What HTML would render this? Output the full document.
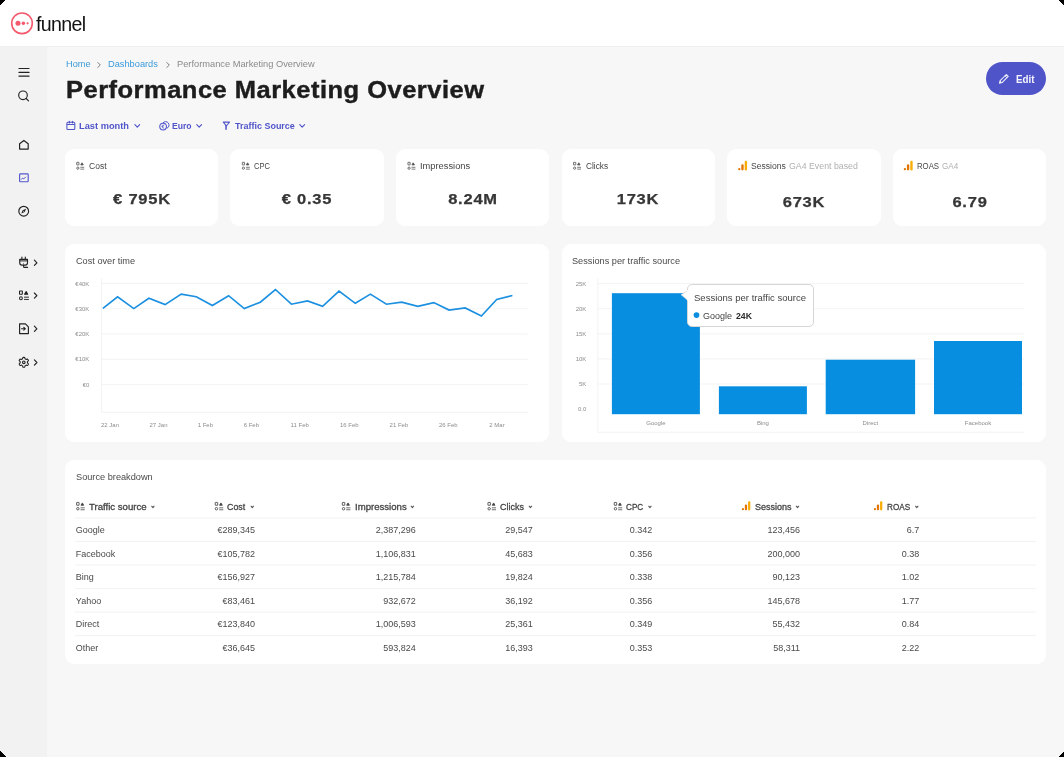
<!DOCTYPE html>
<html><head><meta charset="utf-8"><title>Performance Marketing Overview</title>
<style>
html,body{margin:0;padding:0;}
body{width:1064px;height:757px;overflow:hidden;background:#000;font-family:"Liberation Sans", sans-serif;position:relative;}
.page{position:absolute;left:0;top:0;width:1064px;height:757px;background:#f7f7f7;will-change:transform;}
.t{position:absolute;white-space:nowrap;line-height:1;-webkit-font-smoothing:antialiased;}
.card{position:absolute;background:#fff;border-radius:9px;}
svg{position:absolute;left:0;top:0;overflow:visible;}
</style></head>
<body>
<div class="page"><div style="position:absolute;left:0;top:0;width:1064px;height:46px;background:#fff;border-bottom:1px solid #efefef"></div><div style="position:absolute;left:0;top:47px;width:47px;height:710px;background:#f2f2f2;"></div><div class="card" style="left:64.70px;top:149px;width:153.6px;height:77.1px"></div><div class="card" style="left:230.30px;top:149px;width:153.6px;height:77.1px"></div><div class="card" style="left:395.90px;top:149px;width:153.6px;height:77.1px"></div><div class="card" style="left:561.50px;top:149px;width:153.6px;height:77.1px"></div><div class="card" style="left:727.10px;top:149px;width:153.6px;height:77.1px"></div><div class="card" style="left:892.70px;top:149px;width:153.6px;height:77.1px"></div><div class="card" style="left:64.7px;top:243.8px;width:484.8px;height:198.6px"></div><div class="card" style="left:561.5px;top:243.8px;width:484.8px;height:198.6px"></div><div class="card" style="left:64.7px;top:460.4px;width:981.6px;height:203.7px"></div><svg width="1064" height="757" viewBox="0 0 1064 757"><circle cx="22" cy="23.3" r="10.3" fill="none" stroke="#f4596d" stroke-width="1.6"/><circle cx="18" cy="23.3" r="2.5" fill="#f4596d"/><circle cx="23.4" cy="23.3" r="1.75" fill="#f4596d"/><circle cx="27.6" cy="23.3" r="1.1" fill="#f4596d"/><line x1="19" y1="68.5" x2="29" y2="68.5" stroke="#222" stroke-width="1.2" stroke-linecap="round"/><line x1="19" y1="72.4" x2="29" y2="72.4" stroke="#222" stroke-width="1.2" stroke-linecap="round"/><line x1="19" y1="76.2" x2="29" y2="76.2" stroke="#222" stroke-width="1.2" stroke-linecap="round"/><circle cx="23" cy="95.3" r="4.3" fill="none" stroke="#222" stroke-width="1.15"/><line x1="26.2" y1="98.5" x2="28.5" y2="100.8" stroke="#222" stroke-width="1.15" stroke-linecap="round"/><path d="M19.6 143.7 L23.9 140.4 L28.2 143.7 V149.1 H19.6 Z" fill="none" stroke="#222" stroke-width="1.2" stroke-linejoin="round"/><rect x="19.6" y="173.9" width="8.6" height="7.8" rx="0.8" fill="none" stroke="#5257cd" stroke-width="1.15"/><polyline points="21.3,179.4 22.7,178 23.8,178.9 25.5,177.1" fill="none" stroke="#5257cd" stroke-width="1" stroke-linejoin="round" stroke-linecap="round"/><circle cx="23.7" cy="211.2" r="4.9" fill="none" stroke="#222" stroke-width="1.15"/><path d="M21.3 213.6 L22.6 210.3 L26.1 208.8 L24.7 212.1 Z" fill="#222"/><circle cx="23.7" cy="211.2" r="0.5" fill="#f2f2f2"/><path d="M21.9 257.1 V259.2 M25.3 257.1 V259.2" stroke="#222" stroke-width="1.1" stroke-linecap="round"/><path d="M19.7 259.4 H27.5 V262.8 Q27.5 265.1 25.2 265.1 H22 Q19.7 265.1 19.7 262.8 Z" fill="none" stroke="#222" stroke-width="1.1" stroke-linejoin="round"/><circle cx="23.6" cy="263.3" r="0.45" fill="#222"/><line x1="19.6" y1="260.9" x2="27.6" y2="260.9" stroke="#222" stroke-width="1"/><path d="M23.6 265.1 V266.7 Q23.6 267.4 24.3 267.4 H27.6" fill="none" stroke="#222" stroke-width="1.1" stroke-linecap="round"/><rect x="19.52" y="290.92" width="2.81" height="3.26" rx="0.30" fill="none" stroke="#222" stroke-width="1.05"/><path d="M26.13 291.51 L27.68 294.19 L24.57 294.19 Z" fill="#222" stroke="#222" stroke-width="1.05" stroke-linejoin="round"/><circle cx="20.93" cy="298.24" r="1.41" fill="none" stroke="#222" stroke-width="1.05"/><path d="M24.05 297.16 H28.90 M24.05 299.42 H28.90" stroke="#222" stroke-width="0.95"/><path d="M19.6 323.8 H25.4 L28.4 326.8 V333.6 H19.6 Z" fill="none" stroke="#222" stroke-width="1.15" stroke-linejoin="round"/><path d="M21.5 328.7 H25.3 M23.8 327.3 L25.3 328.7 L23.8 330.1" fill="none" stroke="#222" stroke-width="1.1" stroke-linecap="round" stroke-linejoin="round"/><polygon points="27.48,362.30 27.47,362.62 27.42,362.94 27.95,363.41 28.42,363.98 28.26,364.38 28.06,364.76 27.83,365.12 27.57,365.46 26.84,365.34 26.17,365.12 25.91,365.31 25.64,365.49 25.36,365.64 25.06,365.76 24.91,366.45 24.65,367.15 24.23,367.20 23.80,367.22 23.37,367.20 22.95,367.15 22.69,366.45 22.54,365.76 22.24,365.64 21.96,365.49 21.69,365.31 21.43,365.12 20.76,365.34 20.03,365.46 19.77,365.12 19.54,364.76 19.34,364.38 19.18,363.98 19.65,363.41 20.18,362.94 20.13,362.62 20.12,362.30 20.13,361.98 20.18,361.66 19.65,361.19 19.18,360.62 19.34,360.22 19.54,359.84 19.77,359.48 20.03,359.14 20.76,359.26 21.43,359.48 21.69,359.29 21.96,359.11 22.24,358.96 22.54,358.84 22.69,358.15 22.95,357.45 23.37,357.40 23.80,357.38 24.23,357.40 24.65,357.45 24.91,358.15 25.06,358.84 25.36,358.96 25.64,359.11 25.91,359.29 26.17,359.48 26.84,359.26 27.57,359.14 27.83,359.48 28.06,359.84 28.26,360.22 28.42,360.62 27.95,361.19 27.42,361.66 27.47,361.98" fill="none" stroke="#222" stroke-width="1.1" stroke-linejoin="round"/><circle cx="23.8" cy="362.3" r="1.3" fill="none" stroke="#222" stroke-width="1.1"/><polyline points="34.4,260.20 36.9,262.80 34.4,265.40" fill="none" stroke="#222" stroke-width="1.15" stroke-linecap="round" stroke-linejoin="round"/><polyline points="34.4,293.00 36.9,295.60 34.4,298.20" fill="none" stroke="#222" stroke-width="1.15" stroke-linecap="round" stroke-linejoin="round"/><polyline points="34.4,326.20 36.9,328.80 34.4,331.40" fill="none" stroke="#222" stroke-width="1.15" stroke-linecap="round" stroke-linejoin="round"/><polyline points="34.4,359.90 36.9,362.50 34.4,365.10" fill="none" stroke="#222" stroke-width="1.15" stroke-linecap="round" stroke-linejoin="round"/><polygon points="0,0 5.5,0 0,5.5" fill="#000" shape-rendering="crispEdges"/><polygon points="1064,0 1058,0 1064,6" fill="#000" shape-rendering="crispEdges"/><polygon points="0,751 0,757 7,757" fill="#000" shape-rendering="crispEdges"/><polygon points="1064,751 1064,757 1058,757" fill="#000" shape-rendering="crispEdges"/><line x1="101.5" y1="283.40" x2="527.8" y2="283.40" stroke="#f0f0f0" stroke-width="0.8"/><line x1="101.5" y1="308.70" x2="527.8" y2="308.70" stroke="#f0f0f0" stroke-width="0.8"/><line x1="101.5" y1="334.00" x2="527.8" y2="334.00" stroke="#f0f0f0" stroke-width="0.8"/><line x1="101.5" y1="359.30" x2="527.8" y2="359.30" stroke="#f0f0f0" stroke-width="0.8"/><line x1="101.5" y1="384.60" x2="527.8" y2="384.60" stroke="#f0f0f0" stroke-width="0.8"/><line x1="101.5" y1="278.4" x2="101.5" y2="412.3" stroke="#f0f0f0" stroke-width="0.8"/><line x1="101.5" y1="412.3" x2="527.8" y2="412.3" stroke="#f0f0f0" stroke-width="0.8"/><polyline points="102.9,308.3 117.6,296.8 133.8,308.6 148.9,298.3 165.1,304.6 181.2,294.1 196.3,296.7 212.4,305.5 228.6,295.7 244.3,308.6 260.3,302.2 275.4,289.5 291.4,304.2 307.5,300.9 322.6,306.3 339,291.1 355.3,303.3 370.4,294.1 386.4,304.2 401.7,302.2 417.8,306.3 433.8,302.6 449.1,310.1 465.2,307.9 481.4,316.1 496.7,299.5 512.4,295.5" fill="none" stroke="#1b8fe0" stroke-width="1.65" stroke-linejoin="miter" stroke-miterlimit="3"/><line x1="597.8" y1="283.60" x2="1024.2" y2="283.60" stroke="#f0f0f0" stroke-width="0.8"/><line x1="597.8" y1="308.70" x2="1024.2" y2="308.70" stroke="#f0f0f0" stroke-width="0.8"/><line x1="597.8" y1="333.80" x2="1024.2" y2="333.80" stroke="#f0f0f0" stroke-width="0.8"/><line x1="597.8" y1="358.90" x2="1024.2" y2="358.90" stroke="#f0f0f0" stroke-width="0.8"/><line x1="597.8" y1="384.00" x2="1024.2" y2="384.00" stroke="#f0f0f0" stroke-width="0.8"/><line x1="597.8" y1="278.4" x2="597.8" y2="432.3" stroke="#f0f0f0" stroke-width="0.8"/><line x1="597.8" y1="432.3" x2="1024.2" y2="432.3" stroke="#f0f0f0" stroke-width="0.8"/><rect x="611.9" y="293.2" width="88.00" height="121.00" fill="#088ee0"/><rect x="718.9" y="386.3" width="88.00" height="27.90" fill="#088ee0"/><rect x="825.7" y="359.7" width="89.40" height="54.50" fill="#088ee0"/><rect x="934" y="341" width="88.00" height="73.20" fill="#088ee0"/><line x1="75.2" y1="517.90" x2="1035.9" y2="517.90" stroke="#efefef" stroke-width="0.8"/><line x1="75.2" y1="541.45" x2="1035.9" y2="541.45" stroke="#efefef" stroke-width="0.8"/><line x1="75.2" y1="565.00" x2="1035.9" y2="565.00" stroke="#efefef" stroke-width="0.8"/><line x1="75.2" y1="588.55" x2="1035.9" y2="588.55" stroke="#efefef" stroke-width="0.8"/><line x1="75.2" y1="612.10" x2="1035.9" y2="612.10" stroke="#efefef" stroke-width="0.8"/><line x1="75.2" y1="635.65" x2="1035.9" y2="635.65" stroke="#efefef" stroke-width="0.8"/><rect x="76.72" y="162.33" width="2.24" height="2.60" rx="0.24" fill="none" stroke="#555" stroke-width="0.85"/><path d="M82.00 162.80 L83.24 164.92 L80.76 164.92 Z" fill="#555" stroke="#555" stroke-width="0.85" stroke-linejoin="round"/><circle cx="77.84" cy="168.17" r="1.12" fill="none" stroke="#555" stroke-width="0.85"/><path d="M80.34 167.31 H84.22 M80.34 169.11 H84.22" stroke="#555" stroke-width="0.77"/><rect x="242.33" y="162.33" width="2.24" height="2.60" rx="0.24" fill="none" stroke="#555" stroke-width="0.85"/><path d="M247.60 162.80 L248.84 164.92 L246.36 164.92 Z" fill="#555" stroke="#555" stroke-width="0.85" stroke-linejoin="round"/><circle cx="243.44" cy="168.17" r="1.12" fill="none" stroke="#555" stroke-width="0.85"/><path d="M245.94 167.31 H249.82 M245.94 169.11 H249.82" stroke="#555" stroke-width="0.77"/><rect x="407.93" y="162.33" width="2.24" height="2.60" rx="0.24" fill="none" stroke="#555" stroke-width="0.85"/><path d="M413.20 162.80 L414.44 164.92 L411.96 164.92 Z" fill="#555" stroke="#555" stroke-width="0.85" stroke-linejoin="round"/><circle cx="409.04" cy="168.17" r="1.12" fill="none" stroke="#555" stroke-width="0.85"/><path d="M411.54 167.31 H415.42 M411.54 169.11 H415.42" stroke="#555" stroke-width="0.77"/><rect x="573.52" y="162.33" width="2.24" height="2.60" rx="0.24" fill="none" stroke="#555" stroke-width="0.85"/><path d="M578.80 162.80 L580.04 164.92 L577.56 164.92 Z" fill="#555" stroke="#555" stroke-width="0.85" stroke-linejoin="round"/><circle cx="574.64" cy="168.17" r="1.12" fill="none" stroke="#555" stroke-width="0.85"/><path d="M577.14 167.31 H581.02 M577.14 169.11 H581.02" stroke="#555" stroke-width="0.77"/><circle cx="739.30" cy="169.20" r="1.15" fill="#e37400"/><rect x="741.30" y="164.30" width="2.35" height="6.10" rx="1.10" fill="#e37400"/><rect x="744.70" y="160.80" width="2.35" height="9.70" rx="1.10" fill="#f9ab00"/><circle cx="904.90" cy="169.20" r="1.15" fill="#e37400"/><rect x="906.90" y="164.30" width="2.35" height="6.10" rx="1.10" fill="#e37400"/><rect x="910.30" y="160.80" width="2.35" height="9.70" rx="1.10" fill="#f9ab00"/><rect x="76.62" y="502.43" width="2.47" height="2.86" rx="0.26" fill="none" stroke="#444" stroke-width="0.85"/><path d="M82.33 502.93 L83.69 505.28 L80.97 505.28 Z" fill="#444" stroke="#444" stroke-width="0.85" stroke-linejoin="round"/><circle cx="77.86" cy="508.74" r="1.24" fill="none" stroke="#444" stroke-width="0.85"/><path d="M80.54 507.82 H84.71 M80.54 509.75 H84.71" stroke="#444" stroke-width="0.77"/><rect x="215.23" y="502.43" width="2.47" height="2.86" rx="0.26" fill="none" stroke="#444" stroke-width="0.85"/><path d="M220.93 502.93 L222.29 505.28 L219.57 505.28 Z" fill="#444" stroke="#444" stroke-width="0.85" stroke-linejoin="round"/><circle cx="216.46" cy="508.74" r="1.24" fill="none" stroke="#444" stroke-width="0.85"/><path d="M219.14 507.82 H223.31 M219.14 509.75 H223.31" stroke="#444" stroke-width="0.77"/><rect x="342.32" y="502.43" width="2.47" height="2.86" rx="0.26" fill="none" stroke="#444" stroke-width="0.85"/><path d="M348.03 502.93 L349.39 505.28 L346.67 505.28 Z" fill="#444" stroke="#444" stroke-width="0.85" stroke-linejoin="round"/><circle cx="343.56" cy="508.74" r="1.24" fill="none" stroke="#444" stroke-width="0.85"/><path d="M346.24 507.82 H350.41 M346.24 509.75 H350.41" stroke="#444" stroke-width="0.77"/><rect x="487.93" y="502.43" width="2.47" height="2.86" rx="0.26" fill="none" stroke="#444" stroke-width="0.85"/><path d="M493.63 502.93 L494.99 505.28 L492.27 505.28 Z" fill="#444" stroke="#444" stroke-width="0.85" stroke-linejoin="round"/><circle cx="489.16" cy="508.74" r="1.24" fill="none" stroke="#444" stroke-width="0.85"/><path d="M491.84 507.82 H496.01 M491.84 509.75 H496.01" stroke="#444" stroke-width="0.77"/><rect x="614.22" y="502.43" width="2.47" height="2.86" rx="0.26" fill="none" stroke="#444" stroke-width="0.85"/><path d="M619.93 502.93 L621.29 505.28 L618.57 505.28 Z" fill="#444" stroke="#444" stroke-width="0.85" stroke-linejoin="round"/><circle cx="615.46" cy="508.74" r="1.24" fill="none" stroke="#444" stroke-width="0.85"/><path d="M618.14 507.82 H622.31 M618.14 509.75 H622.31" stroke="#444" stroke-width="0.77"/><circle cx="742.94" cy="509.18" r="1.09" fill="#e37400"/><rect x="744.85" y="504.52" width="2.23" height="5.79" rx="1.04" fill="#e37400"/><rect x="748.07" y="501.20" width="2.23" height="9.21" rx="1.04" fill="#f9ab00"/><circle cx="874.94" cy="509.18" r="1.09" fill="#e37400"/><rect x="876.85" y="504.52" width="2.23" height="5.79" rx="1.04" fill="#e37400"/><rect x="880.07" y="501.20" width="2.23" height="9.21" rx="1.04" fill="#f9ab00"/><polyline points="151.70,506.24 152.90,507.56 154.10,506.24" fill="none" stroke="#555" stroke-width="1.1" stroke-linecap="round" stroke-linejoin="round"/><polyline points="251.10,506.24 252.30,507.56 253.50,506.24" fill="none" stroke="#555" stroke-width="1.1" stroke-linecap="round" stroke-linejoin="round"/><polyline points="411.20,506.24 412.40,507.56 413.60,506.24" fill="none" stroke="#555" stroke-width="1.1" stroke-linecap="round" stroke-linejoin="round"/><polyline points="529.20,506.24 530.40,507.56 531.60,506.24" fill="none" stroke="#555" stroke-width="1.1" stroke-linecap="round" stroke-linejoin="round"/><polyline points="648.70,506.24 649.90,507.56 651.10,506.24" fill="none" stroke="#555" stroke-width="1.1" stroke-linecap="round" stroke-linejoin="round"/><polyline points="796.30,506.24 797.50,507.56 798.70,506.24" fill="none" stroke="#555" stroke-width="1.1" stroke-linecap="round" stroke-linejoin="round"/><polyline points="915.60,506.24 916.80,507.56 918.00,506.24" fill="none" stroke="#555" stroke-width="1.1" stroke-linecap="round" stroke-linejoin="round"/><rect x="66.9" y="122.2" width="7.9" height="7.2" rx="1" fill="none" stroke="#4f54c9" stroke-width="1.05"/><line x1="66.9" y1="124.5" x2="74.8" y2="124.5" stroke="#4f54c9" stroke-width="1"/><line x1="69.4" y1="121.2" x2="69.4" y2="123.0" stroke="#4f54c9" stroke-width="1.05" stroke-linecap="round"/><line x1="72.5" y1="121.2" x2="72.5" y2="123.0" stroke="#4f54c9" stroke-width="1.05" stroke-linecap="round"/><polyline points="134.90,124.58 137.30,127.22 139.70,124.58" fill="none" stroke="#4f54c9" stroke-width="1.1" stroke-linecap="round" stroke-linejoin="round"/><circle cx="163.1" cy="126.6" r="3.35" fill="none" stroke="#4f54c9" stroke-width="1.05"/><path d="M162.9 123.0 A3.4 3.4 0 1 1 166.9 128.2" fill="none" stroke="#4f54c9" stroke-width="1.0"/><path d="M164.2 125.0 Q162.2 124.9 162.2 126.6 Q162.2 128.3 164.2 128.2 M161.4 126.2 H163.6" fill="none" stroke="#4f54c9" stroke-width="0.8"/><polyline points="196.80,124.58 199.20,127.22 201.60,124.58" fill="none" stroke="#4f54c9" stroke-width="1.1" stroke-linecap="round" stroke-linejoin="round"/><path d="M223.3 122.1 H229.5 L226.3 126.0 Z" fill="none" stroke="#4f54c9" stroke-width="1.05" stroke-linejoin="round"/><path d="M226.0 125.6 V129.2" stroke="#4f54c9" stroke-width="1.5" stroke-linecap="round"/><polyline points="299.80,124.58 302.20,127.22 304.60,124.58" fill="none" stroke="#4f54c9" stroke-width="1.1" stroke-linecap="round" stroke-linejoin="round"/><polyline points="97.80,62.50 100.30,65.00 97.80,67.50" fill="none" stroke="#777" stroke-width="0.95" stroke-linecap="round" stroke-linejoin="round"/><polyline points="166.80,62.50 169.30,65.00 166.80,67.50" fill="none" stroke="#777" stroke-width="0.95" stroke-linecap="round" stroke-linejoin="round"/></svg><div class="t" style="left:35.90px;top:13.67px;font-size:20px;color:#111;font-weight:normal;transform:scaleX(0.9824);transform-origin:0 0;letter-spacing:-0.7px;">funnel</div><div class="t" style="left:65.90px;top:60.30px;font-size:9.1px;color:#3b9bdb;font-weight:normal;transform:scaleX(1.0144);transform-origin:0 0;letter-spacing:0px;">Home</div><div class="t" style="left:108.40px;top:60.30px;font-size:9.1px;color:#3b9bdb;font-weight:normal;transform:scaleX(1.0173);transform-origin:0 0;letter-spacing:0px;">Dashboards</div><div class="t" style="left:176.90px;top:60.21px;font-size:9.2px;color:#8a8a8a;font-weight:normal;transform:scaleX(1.0099);transform-origin:0 0;letter-spacing:0px;">Performance Marketing Overview</div><div class="t" style="left:65.80px;top:79.43px;font-size:23.0px;color:#1d1d1d;font-weight:bold;transform:scaleX(1.1076);transform-origin:0 0;-webkit-text-stroke:0.4px #1d1d1d;letter-spacing:0.45px;">Performance Marketing Overview</div><div class="t" style="left:79.30px;top:121.50px;font-size:9.1px;color:#4f54c9;font-weight:bold;transform:scaleX(1.0194);transform-origin:0 0;letter-spacing:0px;">Last month</div><div class="t" style="left:171.60px;top:121.50px;font-size:9.1px;color:#4f54c9;font-weight:bold;transform:scaleX(0.9446);transform-origin:0 0;letter-spacing:0px;">Euro</div><div class="t" style="left:234.70px;top:121.50px;font-size:9.1px;color:#4f54c9;font-weight:bold;transform:scaleX(0.9868);transform-origin:0 0;letter-spacing:0px;">Traffic Source</div><div style="position:absolute;left:985.9px;top:61.9px;width:60.3px;height:33.6px;border-radius:17px;background:#4f55c9"></div><div class="t" style="left:1015.70px;top:74.65px;font-size:10.1px;color:#f4f4fc;font-weight:bold;transform:scaleX(0.9738);transform-origin:0 0;letter-spacing:0px;">Edit</div><div class="t" style="left:89.20px;top:162.07px;font-size:8.9px;color:#454545;font-weight:normal;transform:scaleX(0.9617);transform-origin:0 0;letter-spacing:0px;">Cost</div><div class="t" style="left:141.50px;transform:translateX(-50%) scaleX(1.1);top:191.00px;font-size:15.0px;color:#363636;font-weight:bold;letter-spacing:0.7px;-webkit-text-stroke:0.25px #363636;">€ 795K</div><div class="t" style="left:254.30px;top:162.07px;font-size:8.9px;color:#454545;font-weight:normal;transform:scaleX(0.8511);transform-origin:0 0;letter-spacing:0px;">CPC</div><div class="t" style="left:307.10px;transform:translateX(-50%) scaleX(1.1);top:191.00px;font-size:15.0px;color:#363636;font-weight:bold;letter-spacing:0.7px;-webkit-text-stroke:0.25px #363636;">€ 0.35</div><div class="t" style="left:419.70px;top:162.07px;font-size:8.9px;color:#454545;font-weight:normal;transform:scaleX(1.0479);transform-origin:0 0;letter-spacing:0px;">Impressions</div><div class="t" style="left:472.70px;transform:translateX(-50%) scaleX(1.1);top:191.00px;font-size:15.0px;color:#363636;font-weight:bold;letter-spacing:0.7px;-webkit-text-stroke:0.25px #363636;">8.24M</div><div class="t" style="left:585.70px;top:162.07px;font-size:8.9px;color:#454545;font-weight:normal;transform:scaleX(0.9305);transform-origin:0 0;letter-spacing:0px;">Clicks</div><div class="t" style="left:638.30px;transform:translateX(-50%) scaleX(1.1);top:191.00px;font-size:15.0px;color:#363636;font-weight:bold;letter-spacing:0.7px;-webkit-text-stroke:0.25px #363636;">173K</div><div class="t" style="left:751.00px;top:162.07px;font-size:8.9px;color:#454545;font-weight:normal;transform:scaleX(0.9668);transform-origin:0 0;letter-spacing:0px;">Sessions</div><div class="t" style="left:788.60px;top:162.07px;font-size:8.9px;color:#b0b0b0;font-weight:normal;transform:scaleX(0.9892);transform-origin:0 0;letter-spacing:0px;">GA4 Event based</div><div class="t" style="left:803.90px;transform:translateX(-50%) scaleX(1.1);top:193.90px;font-size:15.0px;color:#363636;font-weight:bold;letter-spacing:0.7px;-webkit-text-stroke:0.25px #363636;">673K</div><div class="t" style="left:916.70px;top:162.07px;font-size:8.9px;color:#454545;font-weight:normal;transform:scaleX(0.8770);transform-origin:0 0;letter-spacing:0px;">ROAS</div><div class="t" style="left:941.90px;top:162.07px;font-size:8.9px;color:#b0b0b0;font-weight:normal;transform:scaleX(0.9157);transform-origin:0 0;letter-spacing:0px;">GA4</div><div class="t" style="left:969.50px;transform:translateX(-50%) scaleX(1.1);top:193.90px;font-size:15.0px;color:#363636;font-weight:bold;letter-spacing:0.7px;-webkit-text-stroke:0.25px #363636;">6.79</div><div class="t" style="left:75.80px;top:256.90px;font-size:9.1px;color:#4a4a4a;font-weight:normal;transform:scaleX(1.0077);transform-origin:0 0;letter-spacing:0px;">Cost over time</div><div class="t" style="left:571.80px;top:256.55px;font-size:9.15px;color:#4a4a4a;font-weight:normal;transform:scaleX(1.0060);transform-origin:0 0;letter-spacing:0px;">Sessions per traffic source</div><div class="t" style="right:974.70px;top:280.52px;font-size:6.0px;color:#8c8c8c;font-weight:normal;letter-spacing:0px;">€40K</div><div class="t" style="right:974.70px;top:305.82px;font-size:6.0px;color:#8c8c8c;font-weight:normal;letter-spacing:0px;">€30K</div><div class="t" style="right:974.70px;top:331.12px;font-size:6.0px;color:#8c8c8c;font-weight:normal;letter-spacing:0px;">€20K</div><div class="t" style="right:974.70px;top:356.42px;font-size:6.0px;color:#8c8c8c;font-weight:normal;letter-spacing:0px;">€10K</div><div class="t" style="right:974.70px;top:381.72px;font-size:6.0px;color:#8c8c8c;font-weight:normal;letter-spacing:0px;">€0</div><div class="t" style="left:101.00px;top:422.12px;font-size:6.0px;color:#8c8c8c;font-weight:normal;letter-spacing:0px;">22 Jan</div><div class="t" style="left:149.50px;top:422.12px;font-size:6.0px;color:#8c8c8c;font-weight:normal;letter-spacing:0px;">27 Jan</div><div class="t" style="left:197.70px;top:422.12px;font-size:6.0px;color:#8c8c8c;font-weight:normal;letter-spacing:0px;">1 Feb</div><div class="t" style="left:243.70px;top:422.12px;font-size:6.0px;color:#8c8c8c;font-weight:normal;letter-spacing:0px;">6 Feb</div><div class="t" style="left:290.60px;top:422.12px;font-size:6.0px;color:#8c8c8c;font-weight:normal;letter-spacing:0px;">11 Feb</div><div class="t" style="left:339.90px;top:422.12px;font-size:6.0px;color:#8c8c8c;font-weight:normal;letter-spacing:0px;">16 Feb</div><div class="t" style="left:389.60px;top:422.12px;font-size:6.0px;color:#8c8c8c;font-weight:normal;letter-spacing:0px;">21 Feb</div><div class="t" style="left:438.90px;top:422.12px;font-size:6.0px;color:#8c8c8c;font-weight:normal;letter-spacing:0px;">26 Feb</div><div class="t" style="left:489.30px;top:422.12px;font-size:6.0px;color:#8c8c8c;font-weight:normal;letter-spacing:0px;">2 Mar</div><div class="t" style="right:477.70px;top:281.22px;font-size:6.0px;color:#8c8c8c;font-weight:normal;letter-spacing:0px;">25K</div><div class="t" style="right:477.70px;top:306.27px;font-size:6.0px;color:#8c8c8c;font-weight:normal;letter-spacing:0px;">20K</div><div class="t" style="right:477.70px;top:331.32px;font-size:6.0px;color:#8c8c8c;font-weight:normal;letter-spacing:0px;">15K</div><div class="t" style="right:477.70px;top:356.37px;font-size:6.0px;color:#8c8c8c;font-weight:normal;letter-spacing:0px;">10K</div><div class="t" style="right:477.70px;top:381.42px;font-size:6.0px;color:#8c8c8c;font-weight:normal;letter-spacing:0px;">5K</div><div class="t" style="right:477.70px;top:406.47px;font-size:6.0px;color:#8c8c8c;font-weight:normal;letter-spacing:0px;">0.0</div><div class="t" style="left:655.90px;transform:translateX(-50%) scaleX(1);top:419.92px;font-size:6.0px;color:#8c8c8c;font-weight:normal;letter-spacing:0px;">Google</div><div class="t" style="left:762.90px;transform:translateX(-50%) scaleX(1);top:419.92px;font-size:6.0px;color:#8c8c8c;font-weight:normal;letter-spacing:0px;">Bing</div><div class="t" style="left:870.40px;transform:translateX(-50%) scaleX(1);top:419.92px;font-size:6.0px;color:#8c8c8c;font-weight:normal;letter-spacing:0px;">Direct</div><div class="t" style="left:978.00px;transform:translateX(-50%) scaleX(1);top:419.92px;font-size:6.0px;color:#8c8c8c;font-weight:normal;letter-spacing:0px;">Facebook</div><div style="position:absolute;left:686.6px;top:284.1px;width:127.5px;height:43px;box-sizing:border-box;border:0.75px solid #d6d6d6;border-radius:5px;background:#fff"></div><div class="t" style="left:693.80px;top:293.16px;font-size:9.5px;color:#444;font-weight:normal;transform:scaleX(1.0022);transform-origin:0 0;letter-spacing:0px;">Sessions per traffic source</div><div class="t" style="left:702.90px;top:310.64px;font-size:9.4px;color:#444;font-weight:normal;transform:scaleX(0.9604);transform-origin:0 0;letter-spacing:0px;">Google</div><div class="t" style="left:736.00px;top:310.64px;font-size:9.4px;color:#2a2a2a;font-weight:bold;transform:scaleX(0.9275);transform-origin:0 0;letter-spacing:0px;">24K</div><div class="t" style="left:75.80px;top:472.98px;font-size:9.0px;color:#4a4a4a;font-weight:normal;transform:scaleX(1.0220);transform-origin:0 0;letter-spacing:0px;">Source breakdown</div><div class="t" style="left:75.80px;top:526.18px;font-size:9.0px;color:#4a4a4a;font-weight:normal;letter-spacing:0px;">Google</div><div class="t" style="right:809.00px;top:526.18px;font-size:9.0px;color:#4a4a4a;font-weight:normal;letter-spacing:0px;">€289,345</div><div class="t" style="right:648.30px;top:526.18px;font-size:9.0px;color:#4a4a4a;font-weight:normal;letter-spacing:0px;">2,387,296</div><div class="t" style="right:531.30px;top:526.18px;font-size:9.0px;color:#4a4a4a;font-weight:normal;letter-spacing:0px;">29,547</div><div class="t" style="right:411.70px;top:526.18px;font-size:9.0px;color:#4a4a4a;font-weight:normal;letter-spacing:0px;">0.342</div><div class="t" style="right:264.00px;top:526.18px;font-size:9.0px;color:#4a4a4a;font-weight:normal;letter-spacing:0px;">123,456</div><div class="t" style="right:144.80px;top:526.18px;font-size:9.0px;color:#4a4a4a;font-weight:normal;letter-spacing:0px;">6.7</div><div class="t" style="left:75.80px;top:549.73px;font-size:9.0px;color:#4a4a4a;font-weight:normal;letter-spacing:0px;">Facebook</div><div class="t" style="right:809.00px;top:549.73px;font-size:9.0px;color:#4a4a4a;font-weight:normal;letter-spacing:0px;">€105,782</div><div class="t" style="right:648.30px;top:549.73px;font-size:9.0px;color:#4a4a4a;font-weight:normal;letter-spacing:0px;">1,106,831</div><div class="t" style="right:531.30px;top:549.73px;font-size:9.0px;color:#4a4a4a;font-weight:normal;letter-spacing:0px;">45,683</div><div class="t" style="right:411.70px;top:549.73px;font-size:9.0px;color:#4a4a4a;font-weight:normal;letter-spacing:0px;">0.356</div><div class="t" style="right:264.00px;top:549.73px;font-size:9.0px;color:#4a4a4a;font-weight:normal;letter-spacing:0px;">200,000</div><div class="t" style="right:144.80px;top:549.73px;font-size:9.0px;color:#4a4a4a;font-weight:normal;letter-spacing:0px;">0.38</div><div class="t" style="left:75.80px;top:573.28px;font-size:9.0px;color:#4a4a4a;font-weight:normal;letter-spacing:0px;">Bing</div><div class="t" style="right:809.00px;top:573.28px;font-size:9.0px;color:#4a4a4a;font-weight:normal;letter-spacing:0px;">€156,927</div><div class="t" style="right:648.30px;top:573.28px;font-size:9.0px;color:#4a4a4a;font-weight:normal;letter-spacing:0px;">1,215,784</div><div class="t" style="right:531.30px;top:573.28px;font-size:9.0px;color:#4a4a4a;font-weight:normal;letter-spacing:0px;">19,824</div><div class="t" style="right:411.70px;top:573.28px;font-size:9.0px;color:#4a4a4a;font-weight:normal;letter-spacing:0px;">0.338</div><div class="t" style="right:264.00px;top:573.28px;font-size:9.0px;color:#4a4a4a;font-weight:normal;letter-spacing:0px;">90,123</div><div class="t" style="right:144.80px;top:573.28px;font-size:9.0px;color:#4a4a4a;font-weight:normal;letter-spacing:0px;">1.02</div><div class="t" style="left:75.80px;top:596.83px;font-size:9.0px;color:#4a4a4a;font-weight:normal;letter-spacing:0px;">Yahoo</div><div class="t" style="right:809.00px;top:596.83px;font-size:9.0px;color:#4a4a4a;font-weight:normal;letter-spacing:0px;">€83,461</div><div class="t" style="right:648.30px;top:596.83px;font-size:9.0px;color:#4a4a4a;font-weight:normal;letter-spacing:0px;">932,672</div><div class="t" style="right:531.30px;top:596.83px;font-size:9.0px;color:#4a4a4a;font-weight:normal;letter-spacing:0px;">36,192</div><div class="t" style="right:411.70px;top:596.83px;font-size:9.0px;color:#4a4a4a;font-weight:normal;letter-spacing:0px;">0.356</div><div class="t" style="right:264.00px;top:596.83px;font-size:9.0px;color:#4a4a4a;font-weight:normal;letter-spacing:0px;">145,678</div><div class="t" style="right:144.80px;top:596.83px;font-size:9.0px;color:#4a4a4a;font-weight:normal;letter-spacing:0px;">1.77</div><div class="t" style="left:75.80px;top:620.38px;font-size:9.0px;color:#4a4a4a;font-weight:normal;letter-spacing:0px;">Direct</div><div class="t" style="right:809.00px;top:620.38px;font-size:9.0px;color:#4a4a4a;font-weight:normal;letter-spacing:0px;">€123,840</div><div class="t" style="right:648.30px;top:620.38px;font-size:9.0px;color:#4a4a4a;font-weight:normal;letter-spacing:0px;">1,006,593</div><div class="t" style="right:531.30px;top:620.38px;font-size:9.0px;color:#4a4a4a;font-weight:normal;letter-spacing:0px;">25,361</div><div class="t" style="right:411.70px;top:620.38px;font-size:9.0px;color:#4a4a4a;font-weight:normal;letter-spacing:0px;">0.349</div><div class="t" style="right:264.00px;top:620.38px;font-size:9.0px;color:#4a4a4a;font-weight:normal;letter-spacing:0px;">55,432</div><div class="t" style="right:144.80px;top:620.38px;font-size:9.0px;color:#4a4a4a;font-weight:normal;letter-spacing:0px;">0.84</div><div class="t" style="left:75.80px;top:643.93px;font-size:9.0px;color:#4a4a4a;font-weight:normal;letter-spacing:0px;">Other</div><div class="t" style="right:809.00px;top:643.93px;font-size:9.0px;color:#4a4a4a;font-weight:normal;letter-spacing:0px;">€36,645</div><div class="t" style="right:648.30px;top:643.93px;font-size:9.0px;color:#4a4a4a;font-weight:normal;letter-spacing:0px;">593,824</div><div class="t" style="right:531.30px;top:643.93px;font-size:9.0px;color:#4a4a4a;font-weight:normal;letter-spacing:0px;">16,393</div><div class="t" style="right:411.70px;top:643.93px;font-size:9.0px;color:#4a4a4a;font-weight:normal;letter-spacing:0px;">0.353</div><div class="t" style="right:264.00px;top:643.93px;font-size:9.0px;color:#4a4a4a;font-weight:normal;letter-spacing:0px;">58,311</div><div class="t" style="right:144.80px;top:643.93px;font-size:9.0px;color:#4a4a4a;font-weight:normal;letter-spacing:0px;">2.22</div><div class="t" style="left:88.90px;top:502.16px;font-size:9.5px;color:#444;font-weight:normal;transform:scaleX(1.0105);transform-origin:0 0;-webkit-text-stroke:0.3px #444;letter-spacing:0px;">Traffic source</div><div class="t" style="left:227.30px;top:502.16px;font-size:9.5px;color:#444;font-weight:normal;transform:scaleX(0.9309);transform-origin:0 0;-webkit-text-stroke:0.3px #444;letter-spacing:0px;">Cost</div><div class="t" style="left:354.60px;top:502.16px;font-size:9.5px;color:#444;font-weight:normal;transform:scaleX(1.0098);transform-origin:0 0;-webkit-text-stroke:0.3px #444;letter-spacing:0px;">Impressions</div><div class="t" style="left:500.30px;top:502.16px;font-size:9.5px;color:#444;font-weight:normal;transform:scaleX(0.9467);transform-origin:0 0;-webkit-text-stroke:0.3px #444;letter-spacing:0px;">Clicks</div><div class="t" style="left:626.20px;top:502.16px;font-size:9.5px;color:#444;font-weight:normal;transform:scaleX(0.8579);transform-origin:0 0;-webkit-text-stroke:0.3px #444;letter-spacing:0px;">CPC</div><div class="t" style="left:754.70px;top:502.16px;font-size:9.5px;color:#444;font-weight:normal;transform:scaleX(0.9468);transform-origin:0 0;-webkit-text-stroke:0.3px #444;letter-spacing:0px;">Sessions</div><div class="t" style="left:887.20px;top:502.16px;font-size:9.5px;color:#444;font-weight:normal;transform:scaleX(0.8587);transform-origin:0 0;-webkit-text-stroke:0.3px #444;letter-spacing:0px;">ROAS</div><svg width="1064" height="757" viewBox="0 0 1064 757"><g transform="translate(1003.5,79.2) rotate(-45)"><path d="M5.3 -1.35 H-3.4 L-5.6 0 L-3.4 1.35 H5.3 Z" fill="none" stroke="#f2f2fb" stroke-width="1.05" stroke-linejoin="round"/><path d="M-3.4 -1.35 L-5.6 0 L-3.4 1.35 Z" fill="#f2f2fb"/><line x1="3.4" y1="-1.35" x2="3.4" y2="1.35" stroke="#f2f2fb" stroke-width="0.8"/></g><path d="M687.2 290.9 L681.1 294.8 L687.2 299.8" fill="#fff" stroke="#d6d6d6" stroke-width="0.75" stroke-linejoin="round"/><rect x="686.9" y="290.2" width="1.5" height="10.2" fill="#fff"/><circle cx="696.5" cy="315.1" r="2.85" fill="#0a8de0"/></svg>
</div>
</body></html>
